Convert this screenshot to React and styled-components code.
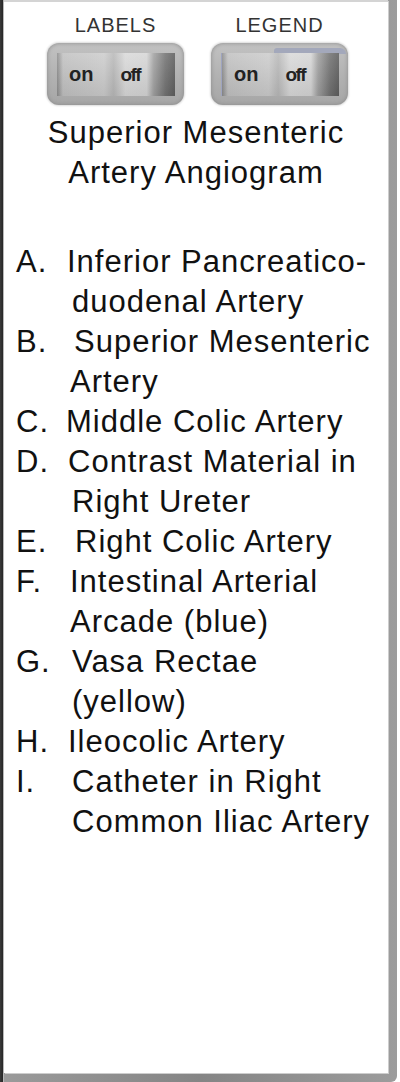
import React from 'react';
import styled, { createGlobalStyle } from 'styled-components';

const legend = [
  { key: 'A.', lines: [['Inferior Pancreatico-', 67], ['duodenal Artery', 72]] },
  { key: 'B.', lines: [['Superior Mesenteric', 74], ['Artery', 70]] },
  { key: 'C.', lines: [['Middle Colic Artery', 66]] },
  { key: 'D.', lines: [['Contrast Material in', 68], ['Right Ureter', 72]] },
  { key: 'E.', lines: [['Right Colic Artery', 75]] },
  { key: 'F.', lines: [['Intestinal Arterial', 70], ['Arcade (blue)', 70]] },
  { key: 'G.', lines: [['Vasa Rectae', 72], ['(yellow)', 72]] },
  { key: 'H.', lines: [['Ileocolic Artery', 68]] },
  { key: 'I.', lines: [['Catheter in Right', 72], ['Common Iliac Artery', 72]] },
];

const App = () => {
  return (
    <>
      <GlobalStyle />
      <Page>
        <Edge />
        <Sheet>
          <Panel>
            <Toolbar>
              <ToggleGroup>
                <Caption>LABELS</Caption>
                <Switch>
                  <Track>
                    <OnText>on</OnText>
                    <OffText>off</OffText>
                  </Track>
                </Switch>
              </ToggleGroup>
              <ToggleGroup>
                <Caption>LEGEND</Caption>
                <Switch $glint>
                  <Track $glint>
                    <OnText>on</OnText>
                    <OffText>off</OffText>
                  </Track>
                </Switch>
              </ToggleGroup>
            </Toolbar>

            <Title>
              Superior Mesenteric
              <br />
              Artery Angiogram
            </Title>

            <LegendList>
              {legend.map((item) => (
                <LegendItem key={item.key}>
                  <Letter>{item.key}</Letter>
                  {item.lines.map(([text, x], i) => (
                    <Line key={i} $x={x}>{text}</Line>
                  ))}
                </LegendItem>
              ))}
            </LegendList>
          </Panel>
        </Sheet>
      </Page>
    </>
  );
};

// Styled Components
const GlobalStyle = createGlobalStyle`
  html, body {
    margin: 0;
    padding: 0;
    background: #ffffff;
  }
  body {
    font-family: "Liberation Sans", Arial, sans-serif;
    color: #111;
  }
`;

const Page = styled.div`
  display: flex;
  width: 400px;
  height: 1082px;
  padding-right: 3px;
  box-sizing: border-box;
  background: #ffffff;
  overflow: hidden;
`;

const Edge = styled.div`
  flex: 0 0 3px;
  background: linear-gradient(to right, #3a3a3a, #262626);
`;

/* grey frame on the right and bottom of the white sheet */
const Sheet = styled.div`
  flex: 1;
  display: flex;
  padding: 0 9px 9px 0;
  border-left: 1px solid #b8b8b8;
  border-bottom-right-radius: 6px;
  background: linear-gradient(to right, #9a9a9a, #858585 50%, #9c9c9c);
`;

const Panel = styled.div`
  flex: 1;
  display: flex;
  flex-direction: column;
  background: #ffffff;
  border-top: 2px solid #d4d4d4;
  box-shadow: 1px 1px 0 #cdcdcd;
  padding-top: 13px;
`;

const Toolbar = styled.div`
  display: flex;
  justify-content: center;
  gap: 27px;
  padding-left: 3px;
`;

const ToggleGroup = styled.div`
  display: flex;
  flex-direction: column;
  align-items: center;
`;

const Caption = styled.div`
  font-size: 20px;
  line-height: 20px;
  letter-spacing: 1px;
  color: #333;
  margin-bottom: 8px;
`;

const Switch = styled.div`
  position: relative;
  width: 137px;
  height: 62px;
  box-sizing: border-box;
  padding: 10px 9px 9px 10px;
  border-radius: 12px;
  background: linear-gradient(to bottom, #c2c2c2, #b0b0b0 60%, #a6a6a6);
  box-shadow: 0 0 2px 1px #dcdcdc, inset 0 0 4px #8a8a8a;

  &::before {
    content: '';
    display: ${({ $glint }) => ($glint ? 'block' : 'none')};
    position: absolute;
    top: 5px;
    right: 2px;
    width: 72px;
    height: 6px;
    border-radius: 4px 8px 0 0;
    background: #a3a8bb;
  }
`;

const Track = styled.div`
  position: relative;
  display: flex;
  align-items: center;
  height: 43px;
  background:
    linear-gradient(to bottom, rgba(255, 255, 255, 0.12), rgba(0, 0, 0, 0.08)),
    linear-gradient(
      to right,
      #8c8c8c 0,
      #c2c2c2 6px,
      #cdcdcd 40%,
      #b9b9b9 48%,
      #dadada 58%,
      #d6d6d6 76%,
      #a2a2a2 82%,
      #737373 92%,
      #5e5e5e 100%
    );
  border-left: ${({ $glint }) => ($glint ? '1px solid #9ea4c0' : 'none')};
`;

const OnText = styled.span`
  font-size: 20px;
  font-weight: bold;
  color: #222;
  margin-left: 12px;
`;

const OffText = styled.span`
  font-size: 19px;
  font-weight: bold;
  letter-spacing: -1.5px;
  color: #222;
  margin-left: 27px;
`;

const Title = styled.div`
  margin-top: 8px;
  font-size: 31px;
  line-height: 40px;
  letter-spacing: 1px;
  text-align: center;
  color: #111;
`;

const LegendList = styled.div`
  margin-top: 49px;
  display: flex;
  flex-direction: column;
`;

const LegendItem = styled.div`
  position: relative;
  font-size: 31px;
  line-height: 40px;
  letter-spacing: 1px;
  color: #111;
`;

const Letter = styled.span`
  position: absolute;
  left: 12px;
  top: 0;
`;

const Line = styled.div`
  white-space: nowrap;
  padding-left: ${({ $x }) => $x - 4}px;
`;

export default App;
